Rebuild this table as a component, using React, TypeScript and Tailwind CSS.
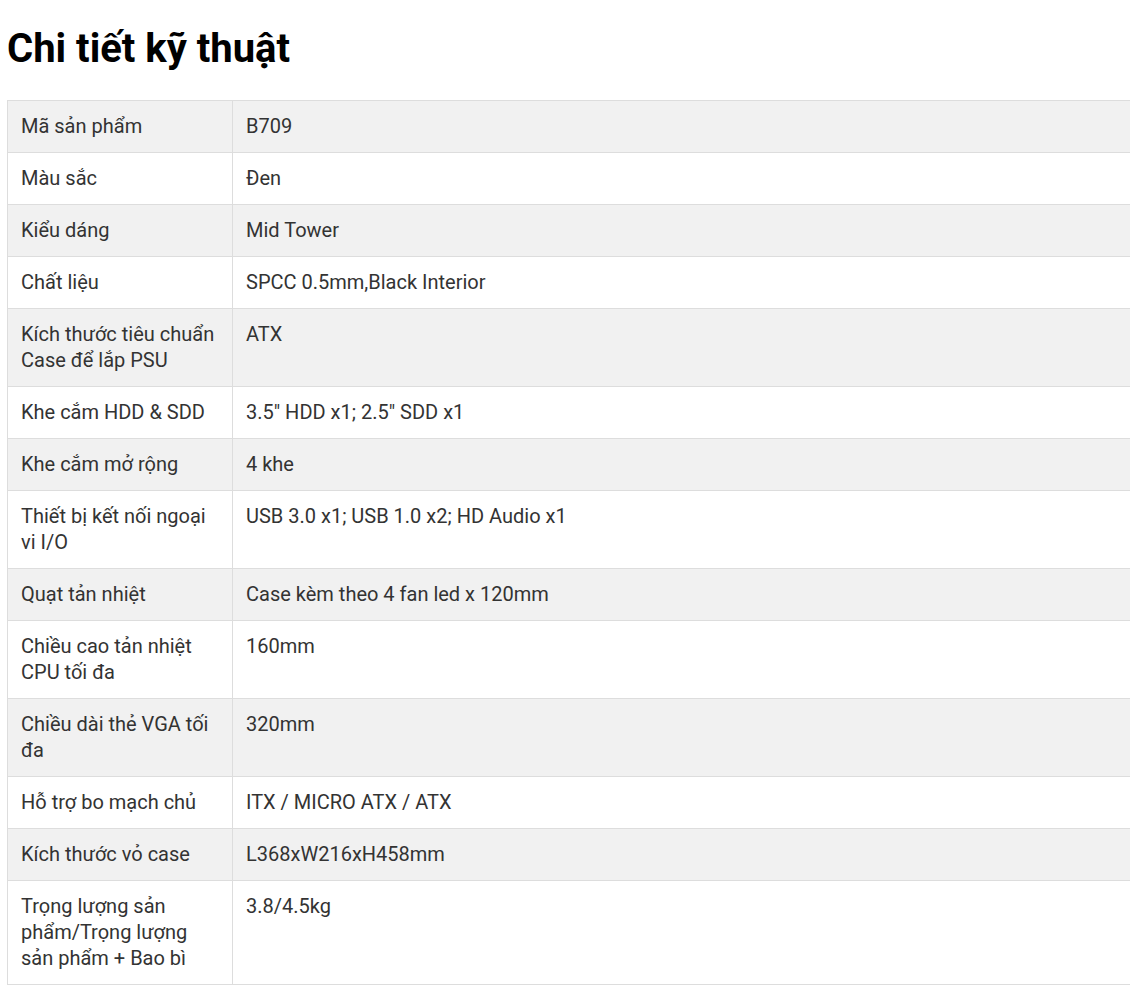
import React from "react";

const rows: [string, string][] = [
  ["Mã sản phẩm", "B709"],
  ["Màu sắc", "Đen"],
  ["Kiểu dáng", "Mid Tower"],
  ["Chất liệu", "SPCC 0.5mm,Black Interior"],
  ["Kích thước tiêu chuẩn Case để lắp PSU", "ATX"],
  ["Khe cắm HDD & SDD", "3.5\" HDD x1; 2.5\" SDD x1"],
  ["Khe cắm mở rộng", "4 khe"],
  ["Thiết bị kết nối ngoại vi I/O", "USB 3.0 x1; USB 1.0 x2; HD Audio x1"],
  ["Quạt tản nhiệt", "Case kèm theo 4 fan led x 120mm"],
  ["Chiều cao tản nhiệt CPU tối đa", "160mm"],
  ["Chiều dài thẻ VGA tối đa", "320mm"],
  ["Hỗ trợ bo mạch chủ", "ITX / MICRO ATX / ATX"],
  ["Kích thước vỏ case", "L368xW216xH458mm"],
  ["Trọng lượng sản phẩm/Trọng lượng sản phẩm + Bao bì", "3.8/4.5kg"],
];

export default function App() {
  return (
    <div className="w-[1130px] overflow-hidden bg-white font-['Roboto',sans-serif]">
      <div className="pl-[7px] pt-[25px]">
        <h2 className="text-[40px] leading-[48px] font-bold text-black">Chi tiết kỹ thuật</h2>
        <table className="mt-[27px] w-[1140px] border-collapse text-[20px] leading-[26px] text-[#333]">
          <tbody>
            {rows.map(([k, v], i) => (
              <tr key={i} className={i % 2 === 0 ? "bg-[#f1f1f1]" : "bg-white"}>
                <td className="w-[225px] border border-[#dddddd] pl-[13px] pr-[13px] pt-[12px] pb-[13px] align-top">
                  {k}
                </td>
                <td className="border border-[#dddddd] pl-[13px] pr-[13px] pt-[12px] pb-[13px] align-top">
                  {v}
                </td>
              </tr>
            ))}
          </tbody>
        </table>
      </div>
    </div>
  );
}
